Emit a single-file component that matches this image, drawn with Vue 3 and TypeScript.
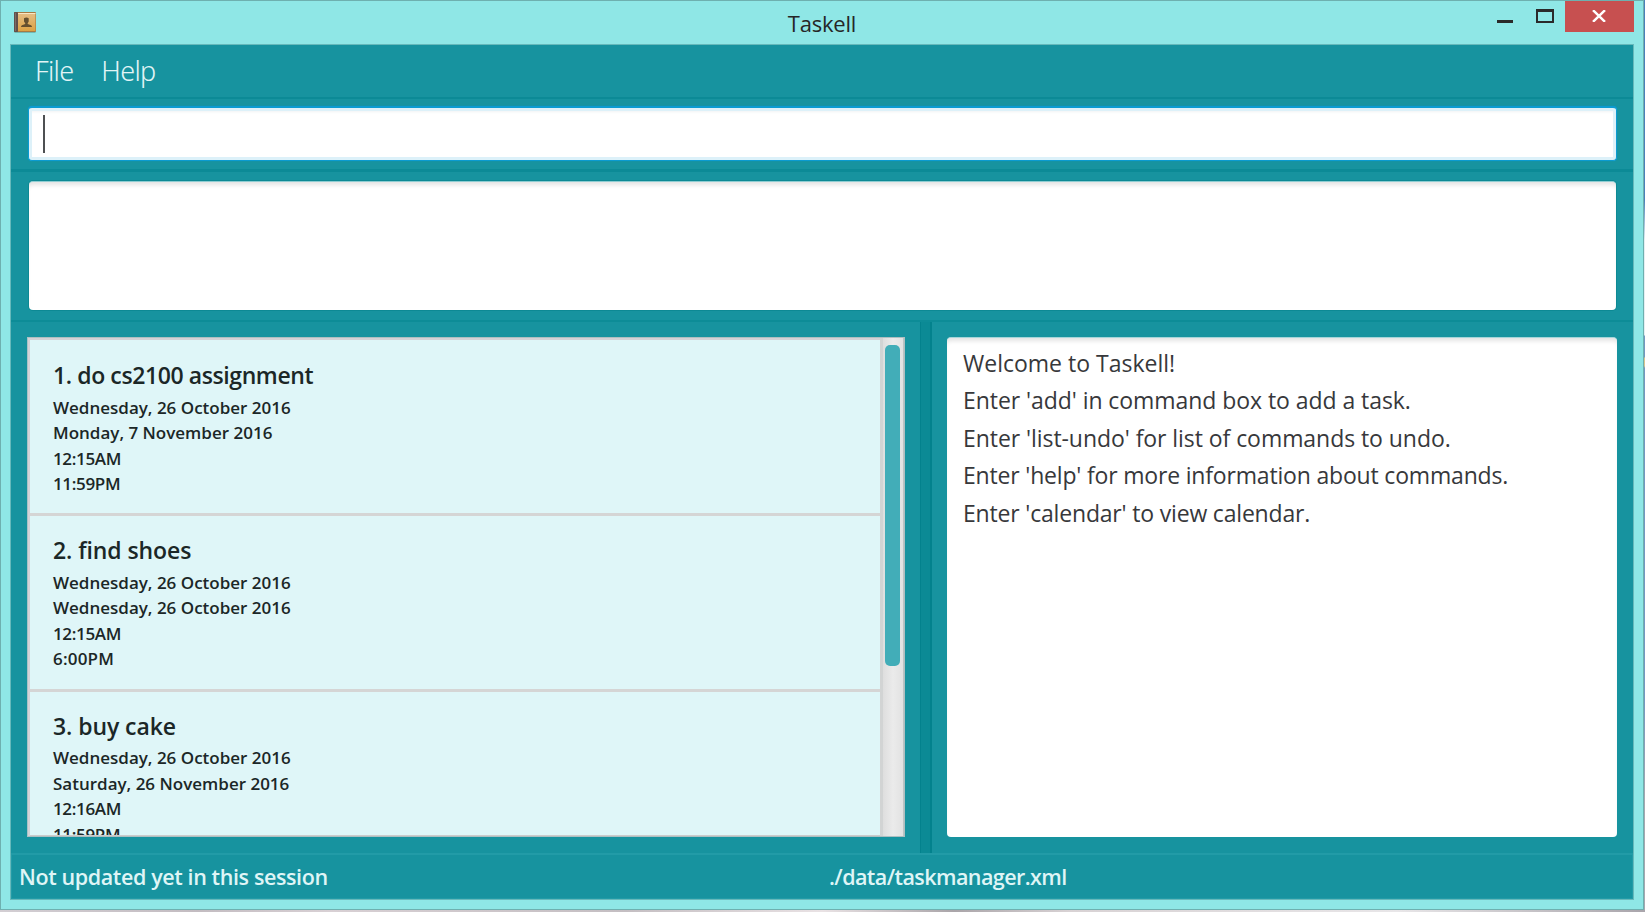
<script setup lang="ts">
import { ref } from 'vue'

interface Task {
  index: number
  name: string
  startDate: string
  endDate: string
  startTime: string
  endTime: string
}

const menus: string[] = ['File', 'Help']

const tasks = ref<Task[]>([
  {
    index: 1,
    name: 'do cs2100 assignment',
    startDate: 'Wednesday, 26 October 2016',
    endDate: 'Monday, 7 November 2016',
    startTime: '12:15AM',
    endTime: '11:59PM',
  },
  {
    index: 2,
    name: 'find shoes',
    startDate: 'Wednesday, 26 October 2016',
    endDate: 'Wednesday, 26 October 2016',
    startTime: '12:15AM',
    endTime: '6:00PM',
  },
  {
    index: 3,
    name: 'buy cake',
    startDate: 'Wednesday, 26 October 2016',
    endDate: 'Saturday, 26 November 2016',
    startTime: '12:16AM',
    endTime: '11:59PM',
  },
])

const messages: string[] = [
  'Welcome to Taskell!',
  "Enter 'add' in command box to add a task.",
  "Enter 'list-undo' for list of commands to undo.",
  "Enter 'help' for more information about commands.",
  "Enter 'calendar' to view calendar.",
]
</script>

<template>
  <div class="desktop">
    <div class="window">
      <header class="titlebar">
        <svg class="app-icon" viewBox="0 0 22 21" width="22" height="21">
          <defs>
            <linearGradient id="cover" x1="0" y1="0" x2="0" y2="1">
              <stop offset="0" stop-color="#e4be86" />
              <stop offset="1" stop-color="#dca244" />
            </linearGradient>
          </defs>
          <rect x="0.5" y="19" width="21" height="1.6" fill="#5e9a96" />
          <rect x="0" y="0" width="22" height="20" rx="1" fill="#a87a42" />
          <rect x="4" y="1" width="17.4" height="18" fill="url(#cover)" />
          <rect x="4" y="1" width="17.4" height="1" fill="#f8e6c4" />
          <rect x="0" y="0" width="4" height="20" rx="0.8" fill="#62504a" />
          <rect x="1" y="1" width="1" height="18" fill="#7d6b66" />
          <path
            d="M10 6.2Q12.4 4.6 14.7 6.2V9.4L13.7 11.2V12L17 13.2Q18 13.8 18 15H7Q7 13.8 8 13.2L11.2 12V11.2L10 9.4Z"
            fill="#65502f"
          />
        </svg>
        <h1 class="title">Taskell</h1>
        <div class="controls">
          <svg class="minimize" viewBox="0 0 16 3" width="16" height="3">
            <rect width="16" height="3" fill="#2a2a2a" />
          </svg>
          <svg class="maximize" viewBox="0 0 18 14" width="18" height="14">
            <path d="M0 0H18V14H0ZM2 3V12H16V3Z" fill="#2a2a2a" fill-rule="evenodd" />
          </svg>
          <div class="close">
            <svg viewBox="0 0 14 12" width="14" height="12">
              <path d="M1 0.2L13 11.8M13 0.2L1 11.8" stroke="#fff" stroke-width="2.5" />
            </svg>
          </div>
        </div>
      </header>

      <main class="client">
        <nav class="menubar">
          <span v-for="menu in menus" :key="menu">{{ menu }}</span>
        </nav>

        <section class="command-pane">
          <div class="command-box"><span class="caret"></span></div>
        </section>

        <section class="result-pane">
          <div class="result-box"></div>
        </section>

        <section class="split">
          <div class="list-pane">
            <div class="list">
              <ul class="cells">
                <li v-for="task in tasks" :key="task.index" class="cell">
                  <h2>{{ task.index }}. {{ task.name }}</h2>
                  <p>{{ task.startDate }}</p>
                  <p>{{ task.endDate }}</p>
                  <p class="time">{{ task.startTime }}</p>
                  <p class="time">{{ task.endTime }}</p>
                </li>
              </ul>
              <div class="scrollbar"><div class="thumb"></div></div>
            </div>
          </div>
          <div class="divider"></div>
          <div class="message-pane">
            <div class="messages">
              <p v-for="message in messages" :key="message">{{ message }}</p>
            </div>
          </div>
        </section>

        <footer class="statusbar">
          <span class="sync">Not updated yet in this session</span>
          <span class="path">./data/taskmanager.xml</span>
        </footer>
      </main>
    </div>
  </div>
</template>

<style>
body {
  margin: 0;
  overflow: hidden;
}
</style>

<style scoped>
* {
  box-sizing: border-box;
}

h1,
h2,
p,
ul {
  margin: 0;
  padding: 0;
  list-style: none;
  font-weight: inherit;
}

.desktop {
  width: 1645px;
  height: 912px;
  padding: 0 1px 2px 0;
  background:
    linear-gradient(90deg, #d3ced3, #c3bcc1 12%, #d8d0d4 20%, #c4bec2 38%, #e9e2e4 50%, #aaa5a9 58%, #d8d2d4 65%, #e8e6e8 85%, #a9a5ab) bottom / 100% 2px no-repeat,
    linear-gradient(#4a80b8 0 200px, #e4eef2 240px 335px, #7397c0 336px 357px, #d8c590 358px 366px, #7397c0 368px 700px, #a5a8b0 800px) right / 1px 100% no-repeat;
  font-family: "Open Sans", "Noto Sans", sans-serif;
  white-space: nowrap;
}

.window {
  display: flex;
  flex-direction: column;
  width: 1644px;
  height: 910px;
  padding: 0 9px 9px;
  border: 1px solid #6eb0af;
  background: #8fe7e6;
}

.titlebar {
  display: grid;
  grid-template-columns: 1fr auto 1fr;
  height: 43px;
  flex: none;
}

.app-icon {
  margin: 11px 0 0 4px;
}

.title {
  font-size: 22px;
  line-height: 30px;
  padding-top: 7px;
  letter-spacing: -0.2px;
  color: #262626;
}

.controls {
  display: flex;
  justify-content: flex-end;
  align-items: flex-start;
}

.minimize {
  margin: 19px 23px 0 0;
}

.maximize {
  margin: 8px 11px 0 0;
}

.close {
  display: flex;
  align-items: center;
  justify-content: center;
  width: 69px;
  height: 31px;
  padding: 0 1px 1px 0;
  background: #c75050;
}

.client {
  display: flex;
  flex-direction: column;
  flex: 1;
  min-height: 0;
  border: 1px solid #66b9bb;
  background: #17939f;
}

.menubar {
  display: flex;
  gap: 28px;
  height: 54px;
  flex: none;
  padding: 7px 0 0 24px;
  border-bottom: 2px solid #0c8a96;
  font-family: "Noto Sans", "Open Sans", sans-serif;
  font-size: 27px;
  font-weight: 300;
  line-height: 38px;
  letter-spacing: -0.7px;
  color: #e2f5f6;
}

.command-pane {
  height: 73px;
  flex: none;
  padding: 7px 16px 0 17px;
  border-bottom: 3px solid #0c8a96;
}

.command-box {
  height: 55px;
  padding: 7px 0 0 14px;
  border: 1px solid #0b9bd1;
  border-top-width: 2px;
  border-radius: 4px;
  background: #fff;
  box-shadow: inset 0 0 0 3px #ddf1f9, inset 0 5px 3px -1px #f1f3f4, 0 0 1px #0b9bd1;
}

.caret {
  display: block;
  width: 2px;
  height: 38px;
  background: #4e5052;
}

.result-pane {
  height: 150px;
  flex: none;
  padding: 9px 17px 0 18px;
  border-bottom: 2px solid #0d8c97;
}

.result-box {
  height: 129px;
  border-top: 1px solid #8fcdd2;
  border-radius: 4px;
  background: #fff;
  box-shadow: inset 0 5px 4px -2px #e4e4e4, 0 0 0 1px #0d8994;
}

.split {
  display: flex;
  height: 531px;
  flex: none;
}

.list-pane {
  width: 909px;
  padding: 15px 15px 16px 16px;
}

.list {
  display: flex;
  height: 500px;
  border: 1px solid #aebfc1;
  border-left-color: #a9c2c6;
  background: #dff6f8;
  overflow: hidden;
  box-shadow: inset 2px 2px 0 #d3d3d7, inset 0 -1px 0 #ccc;
}

.cells {
  width: 852px;
  height: 497px;
  padding: 3px 0 0 2px;
  overflow: hidden;
}

.cell {
  height: 175.25px;
  padding: 17px 0 0 23px;
  border-bottom: 3px solid #d5d5d5;
  font-weight: 600;
  color: #1b2727;
}

.cell h2 {
  margin-bottom: 2.5px;
  font-size: 23px;
  line-height: 34px;
  letter-spacing: -0.08px;
}

.cell:first-child h2 {
  letter-spacing: -0.4px;
}

.cell p {
  font-size: 17px;
  line-height: 25.5px;
}

.cell .time {
  letter-spacing: -0.35px;
}

.cell:nth-child(2) .time:last-child {
  letter-spacing: 0.2px;
}

.scrollbar {
  flex: 1;
  padding: 7px 3px 0 2px;
  border-left: 3px solid #d2d4d4;
  border-right: 1px solid #bcc4c4;
  background: linear-gradient(90deg, #dedede, #ebebeb 50%, #e2e2e2);
}

.thumb {
  height: 321px;
  border-radius: 5px;
  background: #42adb8;
}

.divider {
  width: 12px;
  border: solid #03828d;
  border-width: 0 2px 0 1px;
  background: #0b8a95;
}

.message-pane {
  flex: 1;
  padding: 15px 16px 16px 15px;
}

.messages {
  height: 500px;
  padding: 7px 16px;
  border-top: 1px solid #a5d5d9;
  border-radius: 4px;
  background: #fff;
  box-shadow: inset 0 5px 4px -2px #e4e4e4;
  font-size: 23px;
  line-height: 37.4px;
  letter-spacing: -0.18px;
  color: #37383b;
}

.messages p:first-child {
  letter-spacing: 0;
}

.messages p:nth-child(2),
.messages p:nth-child(3) {
  letter-spacing: -0.06px;
}

.statusbar {
  display: grid;
  grid-template-columns: 810px 1fr;
  flex: 1;
  padding: 6px 0 0 7px;
  border: 1px solid #229ba7;
  border-top-width: 2px;
  font-size: 21.5px;
  font-weight: 600;
  line-height: 32px;
  color: #dff5f6;
}

.sync {
  letter-spacing: -0.39px;
}

.path {
  letter-spacing: -0.57px;
}
</style>
